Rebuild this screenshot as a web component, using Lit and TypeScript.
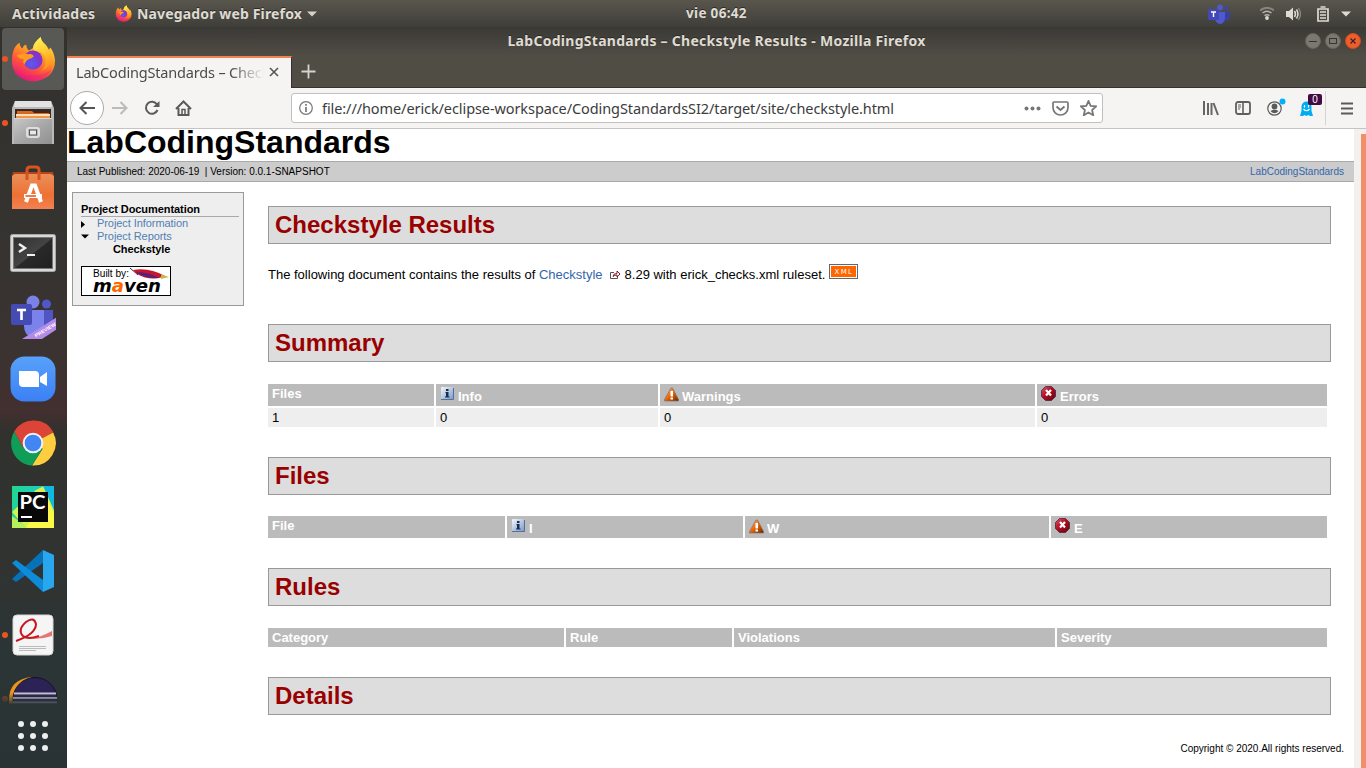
import { LitElement, html, svg, css } from "lit";
import { customElement } from "lit/decorators.js";

const firefox = (size: number) => html`<svg width=${size} height=${size} viewBox="0 0 46 48">
  <defs>
    <linearGradient id="ffBody" x1="0.8" y1="0" x2="0.3" y2="1"><stop offset="0" stop-color="#fff44f"/><stop offset=".35" stop-color="#ffa822"/><stop offset=".65" stop-color="#ff5a36"/><stop offset="1" stop-color="#e8127f"/></linearGradient>
    <linearGradient id="ffTail" x1="0.3" y1="0" x2="0.6" y2="1"><stop offset="0" stop-color="#fff25a"/><stop offset=".5" stop-color="#ffc62e"/><stop offset="1" stop-color="#ff8a1d"/></linearGradient>
    <radialGradient id="ffGlobe" cx=".4" cy=".7" r=".8"><stop offset="0" stop-color="#5a5cf0"/><stop offset=".6" stop-color="#7a38d0"/><stop offset="1" stop-color="#9a2ac0"/></radialGradient>
  </defs>
  <path fill="url(#ffBody)" d="M3 14 Q5 9 9 7 Q9 11 12 13 Q13 9 16 9 Q16 13 19 15 L27 10 Q28 4 31 1 Q32 7 37 11 Q39 13 40 16 L41 12 Q45 17 46 25 Q46 45 23 47.500 Q2 45 1 27 Q1 19 3 14Z"/>
  <path fill="url(#ffTail)" d="M31 1 Q24 6 23 12 Q23 15 27 16 Q35 17 36 24 Q37 32 31 37 Q42 34 43 22 Q42 16 40 12 L40 16 Q38 10 34 7 Q31 4 31 1Z"/>
  <circle cx="23" cy="25" r="10" fill="url(#ffGlobe)"/>
  <path fill="#ff9d22" d="M6 20 Q13 17 18 19 Q22 18 24 21 Q22 23 19 24 Q15 26 14 30 Q12 27 13 24 Q9 24 6 20Z"/>
  <path fill="#e5207f" opacity=".4" d="M3 34 Q10 43 24 41 Q36 41 43 34 Q37 47 23 47 Q9 46 3 34Z"/>
</svg>`;

const files = html`<svg width="42" height="44" viewBox="0 0 42 44">
  <defs><linearGradient id="cab" x2="1" y2="1"><stop offset="0" stop-color="#c8c8c8"/><stop offset=".5" stop-color="#a8a8a8"/><stop offset="1" stop-color="#909090"/></linearGradient></defs>
  <path d="M3 0H39L42 7V43H0V7Z" fill="#b9b9b9"/><path d="M3 0H39L40 6H2Z" fill="#e2e2e2"/>
  <path d="M3 8H39V18H3Z" fill="#382a22"/><path d="M5 10H20L22 12H37V17H5Z" fill="#d9671e"/><path d="M4 13H38V15H4Z" fill="#fbe0ba"/><path d="M4 15H38V17H4Z" fill="#f29544"/>
  <path d="M2 17H40V43H2Z" fill="url(#cab)"/><path d="M2 17.500H40" stroke="#d5d5d5"/>
  <rect x="15" y="27" width="12" height="9" rx="2" fill="#bababa" stroke="#dedede" stroke-width="2"/><rect x="17.500" y="29" width="7" height="5" fill="#e8e8e8" stroke="#555"/>
</svg>`;

const software = html`<svg width="42" height="44" viewBox="0 0 42 44">
  <defs><linearGradient id="bag" x2="0" y2="1"><stop offset="0" stop-color="#e9905a"/><stop offset=".6" stop-color="#ee7133"/><stop offset="1" stop-color="#f28152"/></linearGradient></defs>
  <path d="M1 7H41L42 11H0Z" fill="#b6431a"/><path d="M0 11L3 9H39L42 11V44H0Z" fill="url(#bag)"/>
  <path d="M15 15V5Q15 2 18 2H24Q27 2 27 5V15" fill="none" stroke="#d7531f" stroke-width="3"/>
  <path d="M14 37L20 20.500H23L29 37" fill="none" stroke="#fff" stroke-width="4"/>
  <path d="M12 29H30V33H12Z" fill="#fff"/><path d="M13.500 31H24" stroke="#ef702f" stroke-width="1.800"/>
</svg>`;

const terminal = html`<svg class="low" width="46" height="38" viewBox="0 0 46 38">
  <defs><linearGradient id="scr" x2="1" y2="1"><stop offset="0" stop-color="#303030"/><stop offset=".5" stop-color="#444"/><stop offset=".52" stop-color="#292929"/><stop offset="1" stop-color="#202020"/></linearGradient></defs>
  <rect x=".5" y=".5" width="45" height="37" rx="2" fill="#d8d8d8" stroke="#a7a7a7"/><rect x="3.500" y="3.500" width="39" height="31" fill="url(#scr)" stroke="#777"/>
  <path d="M9 10L15 14L9 18" fill="none" stroke="#f0f0f0" stroke-width="2.400"/><path d="M17 21H25" stroke="#f0f0f0" stroke-width="2"/>
</svg>`;

const teams = html`<svg class="low" width="46" height="44" viewBox="0 0 46 44">
  <circle cx="23" cy="7" r="6.500" fill="#7a82e8"/><circle cx="36.500" cy="9" r="4.500" fill="#5058c8"/>
  <path d="M27 15H43V26Q42 37 34 37H27Z" fill="#4f56c4"/><path d="M14 15H34V31Q32 42 23 42Q14 41 14 31Z" fill="#7b83eb"/>
  <rect x="1" y="9" width="21" height="21" rx="2" fill="#444bb5"/>
  <path d="M7 15H16M11.500 14V25" stroke="#fff" stroke-width="2.600"/>
  <path d="M12 44L47 22V34L32 44Z" fill="#b48ae8"/>
  <text x="0" y="0" transform="translate(26 42.500) rotate(-31)" font-family="Liberation Sans" font-size="5" font-weight="700" letter-spacing=".1" fill="#fff">PREVIEW</text>
</svg>`;

const zoomIcon = html`<svg width="46" height="46" viewBox="0 0 46 46">
  <defs><linearGradient id="zm" x2="0" y2="1"><stop offset="0" stop-color="#58a1fb"/><stop offset="1" stop-color="#3b80f4"/></linearGradient></defs>
  <rect x=".5" y=".5" width="45" height="45" rx="14" fill="url(#zm)"/><path d="M9 15H25Q29 15 29 19V31H13Q9 31 9 27Z" fill="#fff"/><path d="M30 21L37 16V30L30 26Z" fill="#fff"/>
</svg>`;

const chrome = html`<svg width="46" height="46" viewBox="0 0 48 48">
  <path d="M24 24L4.500 12A23.500 23.500 0 0 1 45 13Z" fill="#db4437"/><path d="M24 24L45 13A23.500 23.500 0 0 1 23 47.500L34 30Z" fill="#ffcd40"/><path d="M24 24L34 30L23 47.500A23.500 23.500 0 0 1 4.500 12L14 29Z" fill="#0f9d58"/>
  <path d="M24 13H45.500A23.500 23.500 0 0 0 4.500 12L14 29Z" fill="#db4437"/><circle cx="24" cy="24" r="10.800" fill="#f1f1f1"/><circle cx="24" cy="24" r="8.700" fill="#4285f4"/>
</svg>`;

const pycharm = html`<svg width="42" height="42" viewBox="0 0 42 42">
  <defs><linearGradient id="pcg" x2="1" y2=".4"><stop offset="0" stop-color="#21d789"/><stop offset="1" stop-color="#20c4e8"/></linearGradient></defs>
  <path d="M0 0H42V42H0Z" fill="url(#pcg)"/><path d="M0 26L24 4L32 0L42 24V42H14Z" fill="#d9f24b"/><path d="M0 30V42H16Z" fill="#b9ef59"/><path d="M34 10L42 28V42H14Z" fill="#fcf84a"/><path d="M31 0H42V24Z" fill="#12b8df"/>
  <rect x="6" y="6" width="30" height="30" fill="#080808"/><path d="M9 31H20" stroke="#fff" stroke-width="2"/>
  <text x="7.500" y="23" font-family="Lato, sans-serif" font-size="19" font-weight="700" textLength="26" lengthAdjust="spacingAndGlyphs" fill="#fff">PC</text>
</svg>`;

const vscode = html`<svg width="42" height="42" viewBox="0 0 42 42">
  <path d="M0 29L31 0V13L4 32Z" fill="#0872b9"/><path d="M0 13L4 10L31 30V42Z" fill="#0e8cd9"/><path d="M31 0L42 5V37L31 42Z" fill="#28a7ef"/>
</svg>`;

const pdf = html`<svg width="42" height="42" viewBox="0 0 42 42">
  <rect x="1" y="1" width="40" height="40" rx="4" fill="#f5f5f5" stroke="#d5d5d5"/><path d="M7 32.500H34M7 34.500H34M7 36.500H24" stroke="#bbb"/>
  <path d="M11 22Q20 28 40 17V22Q24 27 14 23Z" fill="#e57676"/><path d="M4 27Q24 20 24 10Q22 2 14 8Q5 16 11 22Q16 26 27 22" fill="none" stroke="#c7161c" stroke-width="2"/>
</svg>`;

const eclipse = html`<svg width="48" height="46" viewBox="0 0 48 46">
  <path d="M23 0Q0 2 0 23Q0 36 8 40L9 10Z" fill="#e8951d"/><circle cx="26" cy="22.500" r="22" fill="#2c2255" stroke="#14122b"/>
  <path d="M5 16.500H47M4 21H48M4 25.500H48" stroke="#c5c4d3" stroke-width="2"/>
</svg>`;

const infoIcon = html`<svg class="sev" width="14" height="15" viewBox="0 0 14 15"><defs><linearGradient id="inf" x2="1" y2="1"><stop offset="0" stop-color="#f4f8fc"/><stop offset="1" stop-color="#7797c4"/></linearGradient></defs><rect x="1" y="1" width="12.500" height="12.500" rx="1" fill="url(#inf)"/><path d="M1 13.500H13.500V2" fill="none" stroke="#54709c"/><path d="M6 3H8.500V5H6ZM5.500 6H8.500V10.500H9.500V11.500H5V10.500H6V7H5.500Z" fill="#182c50"/></svg>`;
const warnIcon = html`<svg class="sev warn" width="15" height="15" viewBox="0 0 15 15"><defs><linearGradient id="wrn" x2="1" y2="1"><stop offset=".2" stop-color="#ff9c50"/><stop offset=".5" stop-color="#ec6500"/><stop offset="1" stop-color="#632800"/></linearGradient></defs><path d="M7 1H8.500L14.500 12.500V14H.5V12.500Z" fill="url(#wrn)" stroke="#80706b" stroke-width=".7"/><path d="M6.500 4H9V9.500H6.500ZM6.500 10.500H9V12.500H6.500Z" fill="#fff"/></svg>`;
const errIcon = html`<svg class="sev" width="15" height="15" viewBox="0 0 15 15"><defs><linearGradient id="er" x2="1" y2="1"><stop offset="0" stop-color="#da5475"/><stop offset=".45" stop-color="#b50c20"/><stop offset="1" stop-color="#5c0610"/></linearGradient></defs><path d="M4.500.5H10.500L14.500 4.500V10.500L10.500 14.500H4.500L.5 10.500V4.500Z" fill="url(#er)" stroke="#472543" stroke-width=".8"/><path d="M5 4L10 9.500M10 4L5 9.500" stroke="#fff" stroke-width="2.200"/></svg>`;

const shared = css`
  :host { display: block; }
  * { box-sizing: border-box; }
  svg { display: block; flex: none; }
`;

@customElement("top-bar")
class TopBar extends LitElement {
  static styles = [shared, css`
    .bar { height: 27px; display: grid; grid-template-columns: 619px 128px 619px; align-items: center; background: linear-gradient(#59564d, #3f3e39); color: #dfdbd2; font: 700 14px/26px "Noto Sans", sans-serif; text-shadow: 0 -1px #2b2a27; }
    .left, .right { display: flex; align-items: center; }
    .left { padding-left: 12px; }
    .act { width: 103px; letter-spacing: .22px; }
    .app { width: 170px; margin-left: 5px; white-space: nowrap; letter-spacing: .15px; }
    .right { justify-content: flex-end; padding-right: 15px; }
    .clock { padding-left: 67px; line-height: 24px; white-space: nowrap; letter-spacing: .32px; font-size: 13.500px; padding-bottom: 1px; }
    .s1 { margin-right: 30px; } .s2 { margin-right: 12px; } .s3 { margin-right: 15px; } .s4 { margin-right: 12px; }
  `];
  render() {
    return html`<div class="bar">
      <div class="left"><span class="act">Actividades</span>${firefox(17)}<span class="app">Navegador web Firefox</span><svg width="10" height="6"><path d="M0 .5H10L5 5.500Z" fill="#d5d1c8"/></svg></div>
      <span class="clock">vie 06:42</span>
      <div class="right">
        <svg class="s1" width="22" height="20" viewBox="0 0 22 20"><circle cx="12" cy="3.500" r="3" fill="#5059c9"/><circle cx="18.500" cy="4.500" r="2.200" fill="#3c45a8"/><path d="M15 8H22V13Q21 18 15 17Z" fill="#3940a0"/><path d="M7 8H17V14Q16 20 12 20Q7 19 7 14Z" fill="#4f58cf"/><rect y="5" width="11" height="11" rx="1" fill="#4148b8"/><path d="M3 8H8M5.500 8V13" stroke="#fff" stroke-width="1.400"/></svg>
        <svg class="s2" width="14" height="13" viewBox="0 0 14 13"><path d="M0 3.500Q7-2 14 3.500" fill="none" stroke="#88857d" stroke-width="1.800"/><path d="M2.500 6Q7 2.500 11.500 6M4.500 8.700Q7 6.700 9.500 8.700" fill="none" stroke="#b5b2aa" stroke-width="1.500"/><circle cx="7" cy="11" r="1.900" fill="#dfdbd2"/></svg>
        <svg class="s3" width="16" height="14" viewBox="0 0 16 14"><path d="M0 4H3L7 .5V13.500L3 10H0Z" fill="#dfdbd2"/><path d="M8.500 4Q10.500 7 8.500 10M10.500 2.500Q13.500 7 10.500 11.500" fill="none" stroke="#dfdbd2" stroke-width="1.500"/><path d="M12.500 1Q16.500 7 12.500 13" fill="none" stroke="#8c897f" stroke-width="1.300"/></svg>
        <svg class="s4" width="12" height="16" viewBox="0 0 12 16"><path d="M1 3H11V15H1Z" fill="none" stroke="#dfdbd2" stroke-width="1.700"/><path d="M3.500 1H8.500M3 6H9M3 9H9M3 12H9" stroke="#dfdbd2" stroke-width="1.500"/></svg>
        <svg width="10" height="6"><path d="M0 .5H10L5 5.500Z" fill="#dfdbd2"/></svg>
      </div>
    </div>`;
  }
}

@customElement("app-dock")
class AppDock extends LitElement {
  static styles = [shared, css`
    .dock { width: 67px; height: 741px; display: flex; flex-direction: column; background: linear-gradient(#32312e 0, #353330 200px, #3b3331 330px, #432f2f 385px, #31322e 405px, #303331 540px, #2b3536 640px, #293335 741px); }
    .slot { height: 64px; display: grid; grid-template-columns: 66px; justify-items: center; align-items: center; position: relative; flex: none; }
    .on { background: #585855; border-radius: 4px; margin: 1px 3px 1px 2px; height: 62px; grid-template-columns: 62px; }
    .low { margin-top: 4px; }
    .dot { position: absolute; left: 2px; top: 29px; width: 6px; height: 6px; border-radius: 3px; background: #e95420; }
    .on .dot { left: 0; top: 28px; }
    .cut { height: 37px; overflow: hidden; align-items: start; padding-top: 10px; -webkit-mask-image: linear-gradient(#000 26px, transparent 38px); }
    .cut .dot { opacity: .5; }
    .grid { display: grid; grid-template-columns: repeat(3, 6px); gap: 6px; margin: 17px 0 0 18px; }
    .grid i { width: 6px; height: 6px; border-radius: 3px; background: #eee; }
  `];
  render() {
    const apps = [[firefox(46), true], [files, true], [software, false], [terminal, false], [teams, false], [zoomIcon, false], [chrome, false], [pycharm, false], [vscode, false], [pdf, true]];
    return html`<div class="dock">
      ${apps.map(([icon, running], n) => html`<div class="slot ${n === 0 ? "on" : ""}">${running ? html`<span class="dot"></span>` : ""}${icon}</div>`)}
      <div class="slot cut"><span class="dot"></span>${eclipse}</div>
      <div class="grid">${Array.from({ length: 9 }, () => html`<i></i>`)}</div>
    </div>`;
  }
}

@customElement("browser-chrome")
class BrowserChrome extends LitElement {
  static styles = [shared, css`
    .title { height: 29px; display: grid; grid-template-columns: 1fr auto 1fr; align-items: center; background: linear-gradient(#3a3935, #504d45); color: #dfdbd2; font: 700 14px/26px "Noto Sans", sans-serif; }
    .name { width: 418px; white-space: nowrap; letter-spacing: .28px; padding-bottom: 2px; text-shadow: 0 -1px #2b2a27; }
    .btns { display: flex; justify-content: flex-end; gap: 4px; padding: 0 5px 1px 0; }
    .tabs { height: 32px; display: flex; background: #504d45; border-bottom: 1px solid #33322e; }
    .tab { width: 225px; height: 32px; background: #f5f4f2; border-top: 2px solid #f0834f; border-right: 1px solid #33322e; padding: 0 12px 2px 9px; display: flex; align-items: center; justify-content: space-between; }
    .label { width: 188px; overflow: hidden; white-space: nowrap; color: #4b4b4b; font: 14.500px/28px "Noto Sans", sans-serif; letter-spacing: -.18px; -webkit-mask-image: linear-gradient(90deg, #000 155px, transparent 188px); }
    .plus { margin: 8px 0 0 9px; }
    .tools { height: 41px; background: #f5f4f2; border-bottom: 1px solid #c6c4c2; display: flex; align-items: center; padding-left: 3px; }
    .back { width: 34px; height: 34px; border: 1px solid #aaa; border-radius: 50%; background: #fff; display: grid; place-items: center; }
    .fwd { margin-left: 8px; } .rel { margin-left: 16px; } .home { margin-left: 15px; }
    .url { margin-left: 99px; width: 812px; height: 30px; border: 1px solid #c2c0be; border-radius: 3px; background: #fff; display: flex; align-items: center; padding-left: 7px; }
    .addr { width: 702px; margin-left: 9px; color: #3c3c3c; font: 14.500px/28px "Noto Sans", sans-serif; letter-spacing: -.09px; white-space: nowrap; }
    .pocket { margin-left: 11px; } .star { margin-left: 11px; }
    .lib { margin-left: 100px; } .side { margin-left: 16px; } .acct { margin-left: 16px; }
    .ghost { margin-left: 14px; position: relative; }
    .badge { position: absolute; left: 8px; top: -7px; width: 14px; height: 11px; border-radius: 2px; background: #440a44; color: #fff; font: 10px/11px "Liberation Sans", sans-serif; text-align: center; }
    .sep { width: 1px; height: 34px; background: #d6d4d2; margin: 0 15px 0 12px; }
  `];
  render() {
    return html`
      <div class="title"><span></span><span class="name">LabCodingStandards – Checkstyle Results - Mozilla Firefox</span>
        <div class="btns">${["#7a7871", "#7a7871", "#ec5f2d"].map((c, i) => html`<svg width="16" height="16" viewBox="0 0 16 16"><circle cx="8" cy="8" r="7.500" fill=${c} stroke=${i === 2 ? "#cf4b1d" : "#66645e"}/>${i === 0 ? svg`<path d="M4 8.500H12" stroke="#36352f"/>` : i === 1 ? svg`<rect x="4.500" y="5.500" width="7" height="5" fill="none" stroke="#36352f"/>` : svg`<path d="M5.500 5.500L10.500 10.500M10.500 5.500L5.500 10.500" stroke="#3a241c" stroke-width="1.200"/>`}</svg>`)}</div></div>
      <div class="tabs"><div class="tab"><span class="label">LabCodingStandards – Checkstyle Results</span><svg width="10" height="10"><path d="M1 1L9 9M9 1L1 9" stroke="#555" stroke-width="1.600" fill="none"/></svg></div>
        <svg class="plus" width="15" height="15"><path d="M7.500 0.500V14.500M0.500 7.500H14.500" stroke="#d6d3cc" stroke-width="1.800"/></svg></div>
      <div class="tools">
        <span class="back"><svg width="16" height="14" viewBox="0 0 16 14"><path d="M16 7H1.500M7.500 1L1.500 7L7.500 13" fill="none" stroke="#555" stroke-width="2"/></svg></span>
        <svg class="fwd" width="16" height="14" viewBox="0 0 16 14"><path d="M0 7H14.500M8.500 1L14.500 7L8.500 13" fill="none" stroke="#bbb" stroke-width="2"/></svg>
        <svg class="rel" width="16" height="16" viewBox="0 0 16 16"><path d="M13 4.500A6 6 0 1 0 13.500 10" fill="none" stroke="#5a5a5a" stroke-width="2"/><path d="M15.500 1V7H9Z" fill="#5a5a5a"/></svg>
        <svg class="home" width="17" height="16" viewBox="0 0 17 16"><path d="M1 9L8.500 1.500L16 9M3.500 8V15H13.500V8" fill="none" stroke="#5a5a5a" stroke-width="2"/><path d="M7 15V9.500H10V15" fill="none" stroke="#5a5a5a" stroke-width="1.500"/></svg>
        <div class="url"><svg width="14" height="14" viewBox="0 0 14 14"><circle cx="7" cy="7" r="6.300" fill="none" stroke="#777" stroke-width="1.200"/><path d="M7 6V11M7 3V4.800" stroke="#777" stroke-width="1.700"/></svg>
          <span class="addr">file:///home/erick/eclipse-workspace/CodingStandardsSI2/target/site/checkstyle.html</span>
          <svg width="17" height="5"><circle cx="2.500" cy="2.500" r="2" fill="#777"/><circle cx="8.500" cy="2.500" r="2" fill="#777"/><circle cx="14.500" cy="2.500" r="2" fill="#777"/></svg>
          <svg class="pocket" width="17" height="15" viewBox="0 0 17 15"><path d="M2 1H15Q16 1 16 2V6.500A7.500 7.500 0 0 1 1 6.500V2Q1 1 2 1Z" fill="none" stroke="#777" stroke-width="1.700"/><path d="M4.500 5.500L8.500 9L12.500 5.500" fill="none" stroke="#777" stroke-width="2"/></svg>
          <svg class="star" width="17" height="16" viewBox="0 0 17 16"><path d="M8.500 1L10.700 5.800L16 6.400L12.100 10L13.200 15.200L8.500 12.500L3.800 15.200L4.900 10L1 6.400L6.300 5.800Z" fill="none" stroke="#777" stroke-width="1.800"/></svg></div>
        <svg class="lib" width="16" height="15" viewBox="0 0 16 15"><path d="M1 0V14M5 2V14M8.500 2V14M10.500 2L15 14" stroke="#666" stroke-width="2"/></svg>
        <svg class="side" width="16" height="14" viewBox="0 0 16 14"><rect x="1" y="1" width="14" height="12" rx="2" fill="none" stroke="#5f5f5f" stroke-width="1.800"/><path d="M8 1V13" stroke="#5f5f5f" stroke-width="1.600"/><path d="M3 4H6M3 6H6M3 8H5" stroke="#5f5f5f"/></svg>
        <svg class="acct" width="19" height="20" viewBox="0 0 19 20"><circle cx="7.500" cy="10.500" r="6.700" fill="none" stroke="#5a5a5a" stroke-width="1.200"/><circle cx="7.500" cy="8.500" r="2.900" fill="#5a5a5a"/><path d="M3.500 13Q7.500 10.500 11.500 13Q7.500 17.500 3.500 13Z" fill="#5a5a5a"/><circle cx="15.500" cy="3.500" r="3" fill="#00b0ff"/></svg>
        <span class="ghost"><svg width="13" height="15" viewBox="0 0 13 15"><path d="M1.500 5.500A5 5 0 0 1 11.500 5.500V10L13 15H10L8.500 14L6.500 15L4.500 14L3 15H0L1.500 10Z" fill="#00aef0"/><path d="M4.500 4V6.500M8.500 4V6.500M3.500 8Q6.500 11.500 9.500 8" fill="none" stroke="#fff" stroke-width="1.200"/></svg><span class="badge">0</span></span>
        <span class="sep"></span>
        <svg width="12" height="13"><path d="M0 1.500H12M0 6.500H12M0 11.500H12" stroke="#5a5a5a" stroke-width="2"/></svg>
      </div>`;
  }
}

@customElement("report-page")
class ReportPage extends LitElement {
  static styles = [shared, css`
    .frame { display: flex; height: 639px; }
    .page { width: 1287px; background: #fff; overflow: hidden; font: 13px/16px "Liberation Sans", Arial, sans-serif; color: #000; }
    .track { width: 12px; background: #f2f1f0; padding: 5px 0 0 7px; }
    .thumb { height: 634px; background: #f08f68; }
    .banner { font-size: 32px; line-height: 26px; font-weight: 700; height: 32px; margin: 0; }
    .crumbs { height: 21px; background: #ccc; border: solid #aaa; border-width: 1px 0; padding: 0 10px; display: flex; justify-content: space-between; font-size: 10px; line-height: 19px; white-space: pre; }
    .lnk { color: #36a; }
    .cols { display: flex; }
    .nav { width: 172px; height: 114px; margin: 10px 24px 0 5px; border: 1px solid #999; background: #eee; padding: 10px 4px 0 8px; font-size: 11px; line-height: 13px; letter-spacing: -.07px; }
    .navh { font-weight: 700; border-bottom: 1px solid #aaa; height: 14px; }
    .item { display: flex; color: #5080b5; height: 13px; align-items: center; gap: 8px; }
    .cur { font-weight: 700; padding-left: 32px; }
    .logo { margin-top: 10px; letter-spacing: 0; }
    .main { width: 1063px; margin-top: 24px; }
    .h { height: 38px; margin: 0; border: 1px solid #999; background: #ddd; color: #900; font-size: 24px; line-height: 36px; font-weight: 700; padding-left: 6px; }
    .para { height: 80px; padding-top: 20px; display: flex; align-items: flex-start; line-height: 21px; white-space: pre; }
    .ext { margin: 6px 4px 0 7px; }
    .xml { margin: 0 0 0 4px; }
    .table { display: grid; gap: 2px; width: 1059px; margin: 22px 0 30px; }
    .files { margin-top: 21px; }
    .sum { grid-template-columns: 166px 222px 375px 290px; }
    .files { grid-template-columns: 237px 236px 304px 276px; }
    .rules { grid-template-columns: 296px 166px 321px 270px; }
    .th { background: #bbb; color: #fff; font-weight: 700; height: 22px; padding: 2px 4px; display: flex; }
    .rules .th { height: 19px; }
    .sev { margin: 0 4px 0 0; }
    .warn { margin: 1px 3px 0 0; }
    .sev + span { padding-top: 3px; }
    .td { background: #eee; height: 19px; padding: 2px 4px; }
    .foot { font-size: 10px; line-height: 12px; text-align: right; padding: 28px 10px 0 0; }
  `];
  th(label: string, icon: unknown = "") {
    return html`<div class="th">${icon}<span>${label}</span></div>`;
  }
  render() {
    return html`<div class="frame"><div class="page">
      <h1 class="banner">LabCodingStandards</h1>
      <div class="crumbs"><span>Last Published: 2020-06-19  | Version: 0.0.1-SNAPSHOT</span><span class="lnk">LabCodingStandards</span></div>
      <div class="cols">
        <div class="nav">
          <div class="navh">Project Documentation</div>
          <div class="item"><svg width="8" height="8"><path d="M0 1L4 4.500L0 8Z" fill="#000"/></svg>Project Information</div>
          <div class="item"><svg width="8" height="8"><path d="M0 1.500H8L4 5.500Z" fill="#000"/></svg>Project Reports</div>
          <div class="cur">Checkstyle</div>
          <svg class="logo" width="90" height="30" viewBox="0 0 90 30"><rect x=".5" y=".5" width="89" height="29" fill="#fff" stroke="#000"/>
            <text x="12" y="11" font-family="Liberation Sans" font-size="10" textLength="36" lengthAdjust="spacingAndGlyphs">Built by:</text>
            <text x="12" y="26" font-family="DejaVu Sans" font-size="18.500" font-weight="700" font-style="italic" textLength="68" lengthAdjust="spacingAndGlyphs">m<tspan fill="#f60">a</tspan>ven</text>
            <path d="M49 2L57 9" stroke="#333"/><path d="M52 4Q68 1 84 10Q70 16 56 8Z" fill="#c7152e"/><path d="M55 6Q68 6 78 12Q64 13 55 6Z" fill="#582078"/><path d="M80 8.500L88 11L80 13Z" fill="#c9b842"/></svg>
        </div>
        <div class="main">
          <h2 class="h">Checkstyle Results</h2>
          <div class="para">The following document contains the results of <span class="lnk">Checkstyle</span><svg class="ext" width="11" height="10" viewBox="0 0 11 10"><path d="M4 2.500H.5V8.500H7.500V7" fill="none" stroke="#555"/><path d="M3 6.500Q3 3.500 7 3.500V1L10 4L7 7V5Q4.500 5 3 6.500Z" fill="#fff" stroke="#800010" stroke-width=".9"/></svg>8.29 with erick_checks.xml ruleset.<svg class="xml" width="29" height="15" viewBox="0 0 29 15" shape-rendering="crispEdges"><rect x=".5" y=".5" width="28" height="14" fill="#fff" stroke="#666"/><rect x="2" y="2" width="25" height="11" fill="#f60"/><text x="5.500" y="10" font-family="DejaVu Sans" font-size="7" textLength="17.500" fill="#fff">XML</text></svg></div>
          <h2 class="h">Summary</h2>
          <div class="table sum">${this.th("Files")}${this.th("Info", infoIcon)}${this.th("Warnings", warnIcon)}${this.th("Errors", errIcon)}
            ${["1", "0", "0", "0"].map((v) => html`<div class="td">${v}</div>`)}</div>
          <h2 class="h">Files</h2>
          <div class="table files">${this.th("File")}${this.th("I", infoIcon)}${this.th("W", warnIcon)}${this.th("E", errIcon)}</div>
          <h2 class="h">Rules</h2>
          <div class="table rules">${["Category", "Rule", "Violations", "Severity"].map((v) => this.th(v))}</div>
          <h2 class="h">Details</h2>
        </div>
      </div>
      <div class="foot">Copyright © 2020.All rights reserved.</div>
    </div><div class="track"><div class="thumb"></div></div></div>`;
  }
}

@customElement("app-root")
class AppRoot extends LitElement {
  static styles = [shared, css`
    :host { width: 1366px; height: 768px; overflow: hidden; }
    .desk { display: flex; }
    .win { width: 1299px; }
  `];
  render() {
    return html`<top-bar></top-bar><div class="desk"><app-dock></app-dock><div class="win"><browser-chrome></browser-chrome><report-page></report-page></div></div>`;
  }
}
